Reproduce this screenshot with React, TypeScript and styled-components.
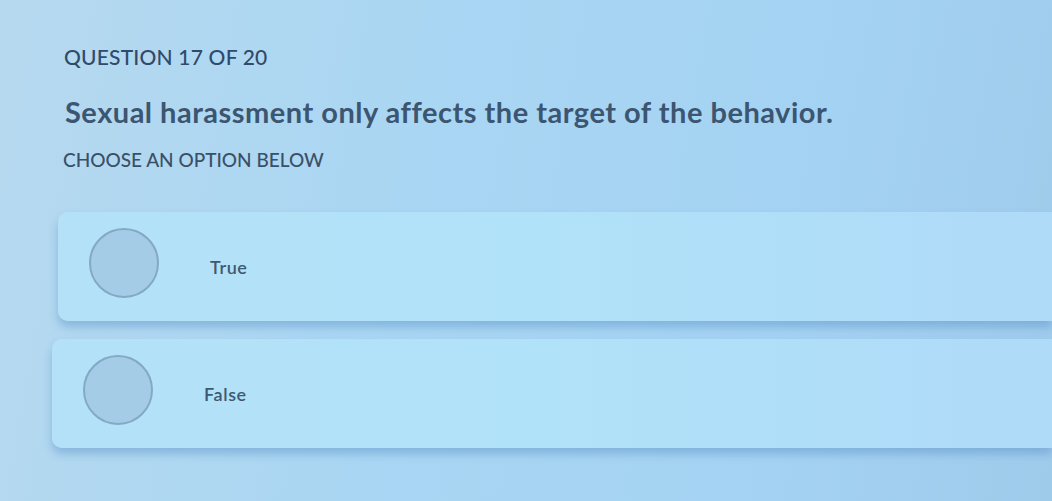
import React from "react";
import styled, { createGlobalStyle } from "styled-components";

const Global = createGlobalStyle`
  html, body { margin: 0; padding: 0; }
  body {
    width: 1052px;
    height: 501px;
    overflow: hidden;
    background: linear-gradient(100deg, #b6d9ef 0%, #a9d6f3 40%, #a4d2f2 75%, #9fcbeb 100%);
    font-family: Lato, "Open Sans", sans-serif;
  }
`;

const Page = styled.main`
  display: flex;
  flex-direction: column;
  padding: 44px 0 0 64px;
  height: 501px;
  box-sizing: border-box;
`;

const Counter = styled.div`
  font-size: 21px;
  font-weight: 500;
  color: #2f4a6c;
  letter-spacing: 0.2px;
  line-height: 26px;
`;

const Question = styled.h1`
  margin: 24px 0 0 1px;
  font-size: 29px;
  font-weight: 700;
  color: #3c5570;
  line-height: 36px;
  letter-spacing: 0.5px;
`;

const Hint = styled.div`
  margin: 18px 0 0 -1px;
  font-size: 19px;
  font-weight: 500;
  color: #3a5068;
  line-height: 24px;
`;

const Options = styled.div`
  display: flex;
  flex-direction: column;
  gap: 18px;
  margin-top: 40px;
`;

const Card = styled.label<{ $shift: number }>`
  display: flex;
  align-items: center;
  height: 109px;
  margin-left: ${(p) => p.$shift}px;
  padding: 0 0 8px 31px;
  box-sizing: border-box;
  border-radius: 10px 0 0 10px;
  background: linear-gradient(90deg, #b4e1f8 0%, #b0e2f9 50%, #afdaf8 100%);
  box-shadow: 0 6px 8px rgba(70, 130, 190, 0.38);
  cursor: pointer;
`;

const Radio = styled.span`
  width: 70px;
  height: 70px;
  border-radius: 50%;
  box-sizing: border-box;
  background: #a5cce6;
  border: 2px solid #83a9c6;
  flex-shrink: 0;
`;

const OptionText = styled.span`
  margin: 8px 0 0 51px;
  font-size: 18px;
  font-weight: 600;
  letter-spacing: 0.6px;
  color: #40596f;
`;

const options = [
  { label: "True", shift: -6 },
  { label: "False", shift: -12 },
];

export default function App() {
  return (
    <>
      <Global />
      <Page>
        <Counter>QUESTION 17 OF 20</Counter>
        <Question>Sexual harassment only affects the target of the behavior.</Question>
        <Hint>CHOOSE AN OPTION BELOW</Hint>
        <Options>
          {options.map((o) => (
            <Card key={o.label} $shift={o.shift}>
              <Radio />
              <OptionText>{o.label}</OptionText>
            </Card>
          ))}
        </Options>
      </Page>
    </>
  );
}
